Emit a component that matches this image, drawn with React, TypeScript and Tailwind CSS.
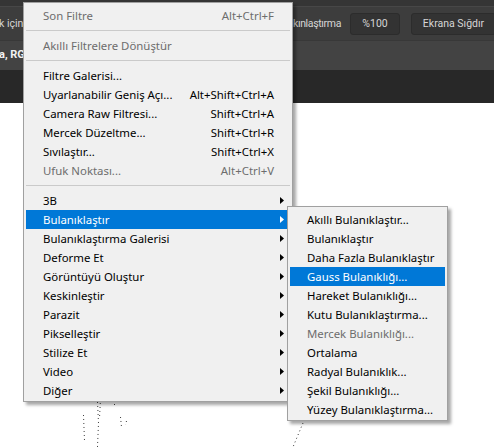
import React from 'react';

type Entry =
  | { label: string; shortcut?: string; disabled?: boolean; sub?: boolean; active?: boolean }
  | 'sep';

const filterMenu: Entry[] = [
  { label: 'Son Filtre', shortcut: 'Alt+Ctrl+F', disabled: true },
  'sep',
  { label: 'Akıllı Filtrelere Dönüştür', disabled: true },
  'sep',
  { label: 'Filtre Galerisi...' },
  { label: 'Uyarlanabilir Geniş Açı...', shortcut: 'Alt+Shift+Ctrl+A' },
  { label: 'Camera Raw Filtresi...', shortcut: 'Shift+Ctrl+A' },
  { label: 'Mercek Düzeltme...', shortcut: 'Shift+Ctrl+R' },
  { label: 'Sıvılaştır...', shortcut: 'Shift+Ctrl+X' },
  { label: 'Ufuk Noktası...', shortcut: 'Alt+Ctrl+V', disabled: true },
  'sep',
  { label: '3B', sub: true },
  { label: 'Bulanıklaştır', sub: true, active: true },
  { label: 'Bulanıklaştırma Galerisi', sub: true },
  { label: 'Deforme Et', sub: true },
  { label: 'Görüntüyü Oluştur', sub: true },
  { label: 'Keskinleştir', sub: true },
  { label: 'Parazit', sub: true },
  { label: 'Pikselleştir', sub: true },
  { label: 'Stilize Et', sub: true },
  { label: 'Video', sub: true },
  { label: 'Diğer', sub: true },
];

const blurMenu: Entry[] = [
  { label: 'Akıllı Bulanıklaştır...' },
  { label: 'Bulanıklaştır' },
  { label: 'Daha Fazla Bulanıklaştır' },
  { label: 'Gauss Bulanıklığı...', active: true },
  { label: 'Hareket Bulanıklığı...' },
  { label: 'Kutu Bulanıklaştırma...' },
  { label: 'Mercek Bulanıklığı...', disabled: true },
  { label: 'Ortalama' },
  { label: 'Radyal Bulanıklık...' },
  { label: 'Şekil Bulanıklığı...' },
  { label: 'Yüzey Bulanıklaştırma...' },
];

const Arrow = ({ light }: { light?: boolean }) => (
  <svg width="4" height="7" viewBox="0 0 4 7" className="ml-[6px]">
    <path d="M0 0 L4 3.5 L0 7 Z" fill={light ? '#ffffff' : '#000000'} />
  </svg>
);

const MenuList = ({ entries, shortcuts }: { entries: Entry[]; shortcuts?: boolean }) => (
  <>
    {entries.map((e, i) => {
      if (e === 'sep') {
        return (
          <div key={i} className="h-[11px] flex items-center">
            <div className="h-px w-full bg-[#cacaca]" />
          </div>
        );
      }
      const color = e.active ? 'text-white' : e.disabled ? 'text-[#6d6d6d]' : 'text-black';
      return (
        <div
          key={i}
          className={`h-[19px] flex items-center pl-[17px] ${e.active ? 'bg-[#0078d7]' : ''} ${color}`}
        >
          <span className="flex-1 whitespace-nowrap">{e.label}</span>
          {shortcuts && <span className="whitespace-nowrap">{e.shortcut}</span>}
          <div className="w-[16px] flex items-center">{e.sub && <Arrow light={e.active} />}</div>
        </div>
      );
    })}
  </>
);

export default function App() {
  return (
    <div className="relative w-[494px] h-[447px] overflow-hidden flex flex-col bg-white font-['Segoe_UI','Noto_Sans',sans-serif]">
      {/* app title strip */}
      <div className="h-[7px] bg-[#353535] border-b border-[#474747]" />

      {/* options bar */}
      <div className="h-[33px] bg-[#3d3d3d] flex items-center font-['Roboto',sans-serif] text-[10.5px] text-[#d6d6d6]">
        <span className="-ml-px whitespace-nowrap">k için</span>
        <span className="ml-auto whitespace-nowrap tracking-[-0.35px]">kınlaştırma</span>
        <div className="ml-[9px] w-[50px] h-[22px] rounded-[3px] bg-[#333333] border border-[#2c2c2c] flex items-center justify-center">
          %100
        </div>
        <div className="ml-[11px] -mr-[2px] w-[85px] h-[22px] rounded-[3px] bg-[#333333] border border-[#2c2c2c] flex items-center justify-center whitespace-nowrap">
          Ekrana Sığdır
        </div>
      </div>

      {/* document tab row */}
      <div className="h-[30px] bg-[#434343] border-t border-[#383838] flex items-center">
        <span className="-ml-px font-['Roboto',sans-serif] text-[11px] font-bold text-[#f2f2f2] whitespace-nowrap">a, RG</span>
      </div>
      <div className="h-[33px] bg-[#282828]" />

      {/* canvas */}
      <div className="flex-1 relative bg-white">
        <svg width="494" height="344" className="absolute inset-0">
          <g stroke="#3a3a3a" strokeWidth="1" fill="none" strokeDasharray="1 3">
            <path d="M97.5 299 L98.5 320 L97.5 344" />
            <path d="M100.5 296 L99.5 315" />
            <path d="M114.5 297 L114.5 303" />
            <path d="M83.5 312 L84.5 338" />
            <path d="M120.5 314 L121.5 324" />
            <path d="M126.5 318 L125.5 322" />
            <path d="M303 320 L293 344" />
          </g>
        </svg>
      </div>

      {/* Filtre menu */}
      <div className="absolute left-[23px] top-[2px] w-[270px] border border-[#a0a0a0] bg-[#f0f0f0] px-[2px] pt-[3px] pb-px text-[11.4px] shadow-[3px_3px_3px_rgba(0,0,0,0.35)]">
        <MenuList entries={filterMenu} shortcuts />
      </div>

      {/* Bulanıklaştır submenu */}
      <div className="absolute left-[287px] top-[206px] w-[161px] border border-[#a0a0a0] bg-[#f0f0f0] px-[2px] pt-[3px] pb-px text-[11.4px] shadow-[3px_3px_3px_rgba(0,0,0,0.35)]">
        <MenuList entries={blurMenu} />
      </div>
    </div>
  );
}
